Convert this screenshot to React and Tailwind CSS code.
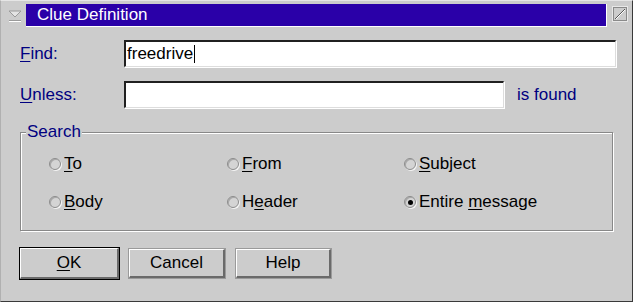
import React, { useState } from 'react';

const FONT = { fontFamily: '"Liberation Sans", Arial, sans-serif' };

// sunken text field: dark top/left, light bottom/right
const Field = ({ width, value, cursor }) => (
  <div
    className={`${width} h-[27px] bg-white border-t-2 border-l-2 border-t-[#202020] border-l-[#202020] border-b border-r border-b-[#dddddd] border-r-[#dddddd] shadow-[1px_1px_0_#ffffff] flex items-center pl-[1px] text-[17px] text-black`}
  >
    <span>{value}</span>
    {cursor && <span className="w-[1px] h-[18px] bg-black ml-[1px]" />}
  </div>
);

const Radio = ({ checked, underline, rest, before = '' }) => (
  <div className="flex items-center gap-[3px] h-[20px] text-[17px] leading-[20px] text-black">
    <span className="w-[12px] h-[12px] rounded-full border border-[#8c8c8c] bg-[#d4d4d4] shadow-[inset_1px_1px_0_#a8a8a8,1px_1px_0_#f4f4f4] flex items-center justify-center">
      {checked && <span className="w-[5px] h-[5px] rounded-full bg-black" />}
    </span>
    <span>
      {before}
      <span className="underline underline-offset-2">{underline}</span>
      {rest}
    </span>
  </div>
);

const Button = ({ children, isDefault, width }) => (
  <button
    className={`${width} ${
      isDefault
        ? 'h-[33px] border border-black'
        : 'h-[31px] mt-[1px] border border-[#9a9a9a]'
    } bg-[#cccccc] p-0`}
  >
    <div className="w-full h-full border-t border-l border-t-white border-l-white border-b-2 border-r-2 border-b-[#6a6a6a] border-r-[#6a6a6a] flex items-center justify-center text-[17px] text-black">
      {children}
    </div>
  </button>
);

export default function App() {
  const [search] = useState('entire');

  return (
    <div
      style={FONT}
      className="w-[633px] h-[302px] bg-[#cccccc] border border-t-[#e6e6e6] border-l-[#b0b0b0] border-r-[#3a3a3a] border-b-[#3a3a3a] flex flex-col overflow-hidden"
    >
      {/* title bar */}
      <div className="flex items-stretch mt-[3px] h-[23px]">
        <div className="w-[25px] flex items-center justify-center pl-[2px]">
          <svg width="14" height="12" viewBox="0 0 14 12">
            <polygon points="1,1 13,1 7,7" fill="#e4e4e4" stroke="#9a9a9a" strokeWidth="1" />
            <line x1="1" y1="10.5" x2="13" y2="10.5" stroke="#9a9a9a" strokeWidth="1" />
            <line x1="1" y1="11.5" x2="13" y2="11.5" stroke="#ffffff" strokeWidth="1" />
          </svg>
        </div>
        <div className="w-[581px] bg-[#2a00a8] border-r border-b border-white flex items-center pl-[11px] text-white text-[17px]">
          Clue Definition
        </div>
        <div className="flex-1 flex items-start justify-center pt-[2px]">
          <svg width="16" height="16" viewBox="0 0 16 16">
            <rect x="0.5" y="0.5" width="15" height="15" fill="#cccccc" stroke="#e8e8e8" />
            <rect x="1.5" y="1.5" width="13" height="13" fill="none" stroke="#8a8a8a" />
            <line x1="3" y1="13" x2="13" y2="3" stroke="#555555" strokeWidth="1" />
            <line x1="4" y1="13" x2="13" y2="4" stroke="#ffffff" strokeWidth="1" />
          </svg>
        </div>
      </div>

      {/* Find */}
      <div className="flex items-center mt-[13px] pl-[19px]">
        <div className="w-[104px] text-[17px] text-[#000080]">
          <span className="underline underline-offset-2">F</span>ind:
        </div>
        <Field width="w-[492px]" value="freedrive" cursor />
      </div>

      {/* Unless */}
      <div className="flex items-center mt-[14px] pl-[19px]">
        <div className="w-[104px] text-[17px] text-[#000080]">
          <span className="underline underline-offset-2">U</span>nless:
        </div>
        <Field width="w-[380px]" value="" />
        <span className="ml-[13px] text-[17px] text-[#000080]">is found</span>
      </div>

      {/* Search group */}
      <fieldset className="ml-[19px] mt-[14px] w-[593px] h-[109px] border border-[#888888] shadow-[inset_1px_1px_0_#ffffff,1px_1px_0_#ffffff]">
        <legend className="ml-[5px] px-[1px] bg-[#cccccc] text-[17px] text-[#000080] leading-[20px]">
          Search
        </legend>
        <div className="grid grid-cols-[178px_177px_1fr] gap-y-[18px] pl-[28px] pt-[12px]">
          <Radio underline="T" rest="o" checked={search === 'to'} />
          <Radio underline="F" rest="rom" checked={search === 'from'} />
          <Radio underline="S" rest="ubject" checked={search === 'subject'} />
          <Radio underline="B" rest="ody" checked={search === 'body'} />
          <Radio before="H" underline="e" rest="ader" checked={search === 'header'} />
          <Radio before="Entire " underline="m" rest="essage" checked={search === 'entire'} />
        </div>
      </fieldset>

      {/* buttons */}
      <div className="flex items-start mt-[16px] pl-[18px]">
        <Button isDefault width="w-[101px]">
          <span className="underline underline-offset-2">O</span>K
        </Button>
        <div className="ml-[8px]">
          <Button width="w-[98px]">Cancel</Button>
        </div>
        <div className="ml-[9px]">
          <Button width="w-[97px]">Help</Button>
        </div>
      </div>
    </div>
  );
}
